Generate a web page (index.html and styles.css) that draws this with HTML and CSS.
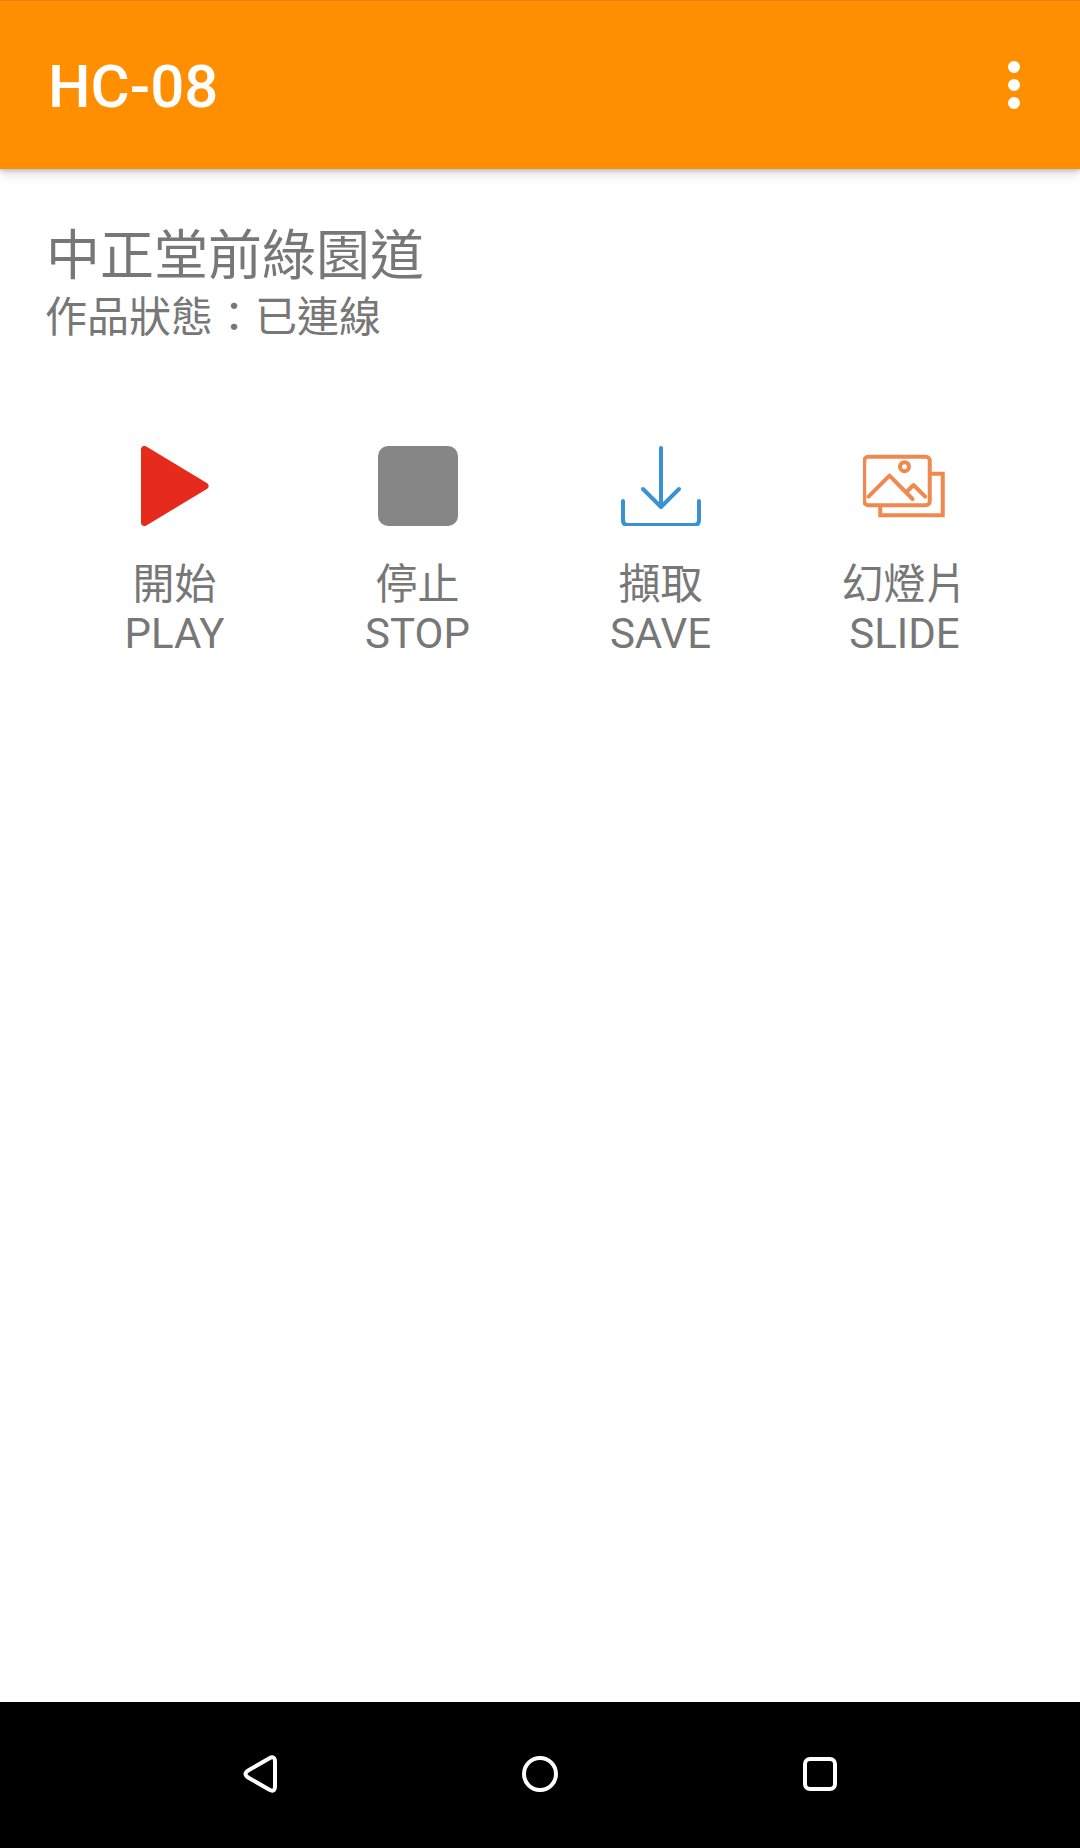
FILE: index.html
```html
<!DOCTYPE html>
<html lang="zh-Hant">
<head>
<meta charset="utf-8">
<title>HC-08</title>
<link rel="stylesheet" href="styles.css">
</head>
<body>
<div class="screen">
  <header class="appbar">
    <h1 class="appbar-title">HC-08</h1>
    <div class="overflow"><span class="dot"></span><span class="dot"></span><span class="dot"></span></div>
  </header>
  <main class="content">
    <h2 class="work-title">中正堂前綠園道</h2>
    <p class="work-status">作品狀態：已連線</p>
    <div class="actions">
      <div class="action">
        <svg class="icon" viewBox="0 0 80 80"><path class="play" d="M9.500 3.500V76.500L70 40Z"/></svg>
        <span class="label">開始<br>PLAY</span>
      </div>
      <div class="action">
        <svg class="icon" viewBox="0 0 80 80"><rect class="stop" x="0" y="0" width="80" height="80" rx="10"/></svg>
        <span class="label">停止<br>STOP</span>
      </div>
      <div class="action">
        <svg class="icon" viewBox="0 0 80 80"><g class="save"><path d="M40 2V60"/><path d="M22 43L40 61L58 43"/><path d="M2 55V74Q2 79 7 79H73Q78 79 78 74V55"/></g></svg>
        <span class="label">擷取<br>SAVE</span>
      </div>
      <div class="action">
        <svg class="icon" viewBox="2 0 84 80"><g class="slide"><rect x="3.250" y="10.750" width="65.500" height="48.500" rx="4"/><path class="slide-back" d="M70 27.750H81.750V69.250H19.250V60"/><circle cx="43.500" cy="20.700" r="4.500"/><path d="M7.500 50.700L28.500 29.700L51.500 53"/><path d="M46.500 45L52.500 39L64.200 50.700"/></g></svg>
        <span class="label">幻燈片<br>SLIDE</span>
      </div>
    </div>
  </main>
  <nav class="navbar">
    <svg class="nav-icon" viewBox="0 0 36 40"><path class="nav-line" d="M27 4.500Q33 1 33 8V32Q33 39 27 35.500L7 24Q0 20 7 16Z"/></svg>
    <svg class="nav-icon" viewBox="0 0 36 40"><circle class="nav-line" cx="18" cy="20" r="16"/></svg>
    <svg class="nav-icon" viewBox="0 0 36 40"><rect class="nav-line" x="3" y="5" width="30" height="30" rx="5"/></svg>
  </nav>
</div>
</body>
</html>
```

FILE: styles.css
```css
* { box-sizing: border-box; }
html, body { margin: 0; padding: 0; }
body { background: #fff; font-family: Roboto, "Noto Sans CJK TC", sans-serif; }
.screen { width: 1080px; height: 1848px; display: flex; flex-direction: column; overflow: hidden; }
.appbar {
  height: 169px; flex: none; display: flex; align-items: center; justify-content: space-between;
  padding: 0 60px 0 48px; background: #ff8f00; border-top: 1px solid #f57c00;
  box-shadow: 0 2px 4px rgba(0,0,0,.18), 0 4px 12px rgba(0,0,0,.14); position: relative;
}
.appbar-title { margin: 4px 0 0; color: #fff; font-size: 60px; font-weight: 500; line-height: 64px; }
.overflow { display: flex; flex-direction: column; gap: 6px; }
.dot { width: 12px; height: 12px; border-radius: 50%; background: #fff; }
.content { flex: 1; padding: 53px 0 0; color: #777; }
.work-title { margin: 0; padding-left: 46px; font-size: 54px; font-weight: 400; line-height: 69px; }
.work-status { margin: 0; padding-left: 45px; font-size: 42px; line-height: 54px; }
.actions { display: grid; grid-template-columns: 243px 243px 243px 245px; padding: 101px 0 0 53px; }
.action { display: flex; flex-direction: column; align-items: center; }
.icon { height: 80px; width: auto; display: block; }
.label { margin-top: 34px; font-size: 42px; line-height: 49px; text-align: center; }
.play { fill: #e62a1b; stroke: #e62a1b; stroke-width: 7; stroke-linejoin: round; }
.stop { fill: #868686; }
.save { fill: none; stroke: #3a93d0; stroke-width: 4; stroke-linecap: round; stroke-linejoin: round; }
.slide { fill: none; stroke: #f0894f; stroke-width: 4; stroke-linecap: round; stroke-linejoin: round; }
.slide-back { stroke-linecap: butt; stroke-linejoin: miter; }
.navbar { height: 146px; flex: none; background: #000; display: flex; justify-content: center; align-items: center; gap: 244px; padding-bottom: 2px; }
.nav-icon { width: 36px; height: 40px; display: block; }
.nav-line { fill: none; stroke: #fff; stroke-width: 4; }
```
